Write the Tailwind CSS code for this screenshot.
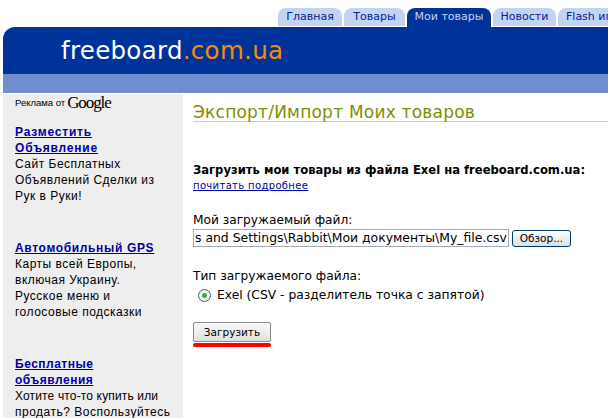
<!DOCTYPE html>
<html><head><meta charset="utf-8"><script src="https://cdn.jsdelivr.net/npm/@tailwindcss/browser@4"></script></head>
<body class="bg-white overflow-hidden">
<div class="w-[608px] h-[418px] overflow-hidden pl-[3px] font-['DejaVu_Sans',sans-serif]">
  <nav class="h-[27px] pt-[8px] pl-[275px] flex gap-[2px] text-[11px] leading-[18px] overflow-hidden w-[605px]">
    <a class="shrink-0 w-[64px] h-[18px] rounded-t-[8px] bg-[#c3d4f2] text-[#00209a] text-center">Главная</a>
    <a class="shrink-0 w-[61px] h-[18px] rounded-t-[8px] bg-[#c3d4f2] text-[#00209a] text-center">Товары</a>
    <a class="shrink-0 w-[84px] h-[19px] rounded-t-[8px] bg-[#003399] text-[#c3d4f2] text-center">Мои товары</a>
    <a class="shrink-0 w-[63px] h-[18px] rounded-t-[8px] bg-[#c3d4f2] text-[#00209a] text-center">Новости</a>
    <a class="shrink-0 w-[80px] h-[18px] rounded-t-[8px] bg-[#c3d4f2] text-[#00209a] pl-[8px] whitespace-nowrap">Flash игры</a>
  </nav>
  <header class="h-[47px] bg-[#003399] rounded-tl-[12px] pl-[58px] pt-[8px] text-[24.5px] leading-[32px] text-white tracking-[0.3px]">freeboard<span class="text-[#f58a0b]">.com.ua</span></header>
  <div class="h-[19px] bg-[#6e8ecf]"></div>
  <div class="mt-px flex h-[324px]">
    <aside class="w-[180px] shrink-0 bg-[#eeeeee] pl-[12px] pr-[4px] pt-[1px] font-['Liberation_Sans',sans-serif] text-[12px] leading-[16px] text-black overflow-hidden tracking-[0.5px]">
      <div class="h-[16px] flex items-center text-[9.5px] leading-[14px] tracking-normal whitespace-nowrap">Реклама от <span class="font-['Liberation_Serif',serif] text-[17px] tracking-[-1.1px] ml-[2px]">Google</span></div>
      <div class="mt-[13px] h-[116px]">
        <a class="block font-bold underline text-[#0000a8] tracking-[0.8px]">Разместить<br>Объявление</a>
        Сайт Бесплатных<br>Объявлений Сделки из<br>Рук в Руки!
      </div>
      <div class="h-[116px]">
        <a class="block font-bold underline text-[#0000a8] tracking-[0.65px]">Автомобильный GPS</a>
        Карты всей Европы,<br>включая Украину.<br>Русское меню и<br>голосовые подсказки
      </div>
      <div>
        <a class="block font-bold underline text-[#0000a8] tracking-[0.5px]">Бесплатные<br>объявления</a>
        <span class="tracking-[0.15px]">Хотите что-то купить или</span><br>продать? Воспользуйтесь
      </div>
    </aside>
    <main class="flex-1 pl-[10px] text-[11px] text-black">
      <h1 class="h-[28px] pt-[9px] text-[17px] leading-[19px] text-[#7f8f00] border-b border-[#c8c8c8] tracking-[0.22px]">Экспорт/Импорт Моих товаров</h1>
      <p class="mt-[40px] font-bold text-[11.6px] leading-[16px] whitespace-nowrap">Загрузить мои товары из файла Exel на freeboard.com.ua:</p>
      <a class="block mt-[1px] text-[10px] leading-[14px] text-[#0000a8] underline tracking-[0.35px]">почитать подробнее</a>
      <p class="mt-[19px] text-[12.2px] leading-[16px]">Мой загружаемый файл:</p>
      <div class="mt-[1px] flex items-center gap-[3px]">
        <div class="w-[316px] h-[18px] border border-[#a5acb2] overflow-hidden text-[12.4px] leading-[16px] pl-[1px] whitespace-nowrap">s and Settings\Rabbit\Мои документы\My_file.csv</div>
        <button class="w-[59px] h-[17px] rounded-[3px] border border-[#003c74] bg-gradient-to-b from-white to-[#dcdce6] text-[10.5px] leading-[14px] text-black">Обзор...</button>
      </div>
      <p class="mt-[21px] text-[12.2px] leading-[16px]">Тип загружаемого файла:</p>
      <label class="mt-[3px] ml-[5px] flex items-center gap-[6px] text-[12.3px] leading-[16px]">
        <svg width="13" height="13" viewBox="0 0 13 13" class="shrink-0"><circle cx="6.5" cy="6.5" r="6" fill="#f4f4f0" stroke="#2c628b"/><circle cx="6.5" cy="6.5" r="2.5" fill="#3fae3f"/></svg>
        Exel (CSV - разделитель точка с запятой)
      </label>
      <button class="block mt-[19px] w-[78px] h-[20px] rounded-[2px] border border-[#8c8c8c] bg-gradient-to-b from-[#fafafa] to-[#e0e0e0] text-[10.5px] leading-[16px] text-black">Загрузить</button>
      <div class="mt-[1px] w-[78px] h-[4px] rounded-full bg-[#ff0000]"></div>
    </main>
  </div>
</div>
</body></html>
